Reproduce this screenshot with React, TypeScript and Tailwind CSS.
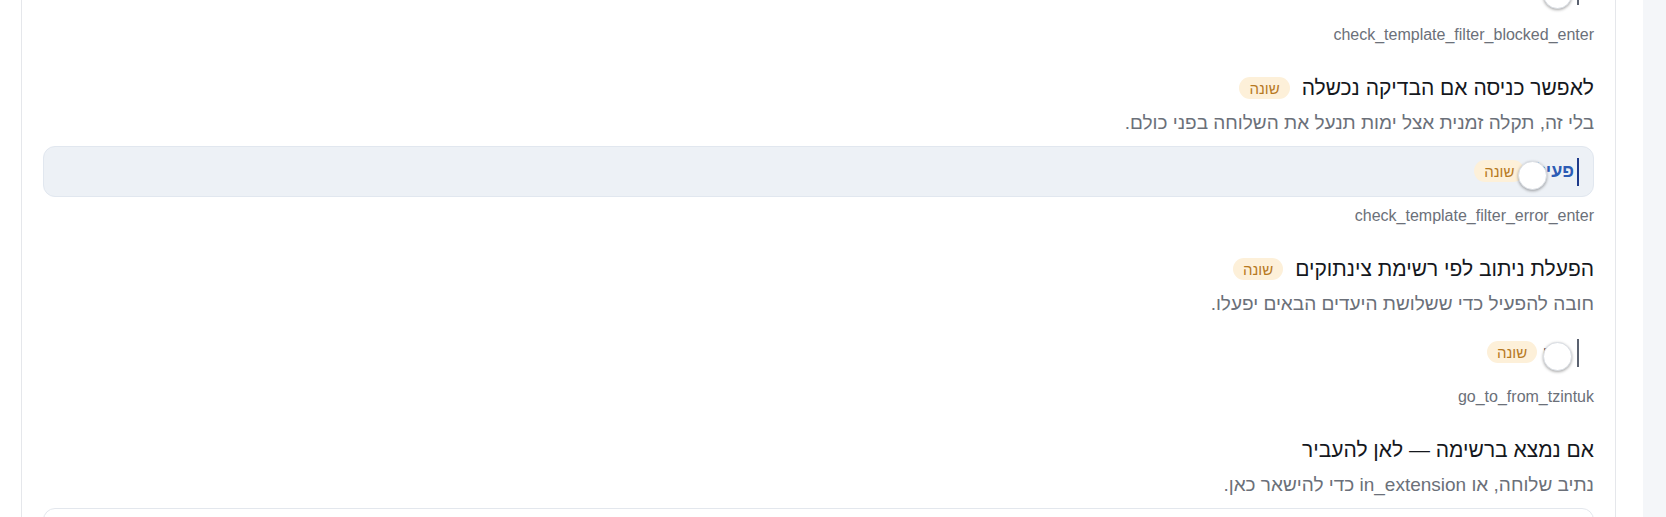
import { ReactNode } from 'react';

type ToggleState = 'on' | 'off';

interface SettingRow {
  title: string;
  changed: boolean;
  description: ReactNode;
  name: string;
  control: 'toggle' | 'input';
  state?: ToggleState;
  hovered?: boolean;
}

const rows: SettingRow[] = [
  {
    title: 'לאפשר כניסה אם הבדיקה נכשלה',
    changed: true,
    description: 'בלי זה, תקלה זמנית אצל ימות תנעל את השלוחה בפני כולם.',
    name: 'check_template_filter_error_enter',
    control: 'toggle',
    state: 'on',
    hovered: true,
  },
  {
    title: 'הפעלת ניתוב לפי רשימת צינתוקים',
    changed: true,
    description: 'חובה להפעיל כדי ששלושת היעדים הבאים יפעלו.',
    name: 'go_to_from_tzintuk',
    control: 'toggle',
    state: 'off',
  },
  {
    title: 'אם נמצא ברשימה — לאן להעביר',
    changed: false,
    description: 'נתיב שלוחה, או in_extension כדי להישאר כאן.',
    name: 'go_to_from_tzintuk_found',
    control: 'input',
  },
];

const Badge = () => (
  <span className="inline-flex h-[22px] items-center rounded-full bg-[#fdf0d9] px-[10px] text-[15px] leading-none text-[#b7791f]">
    שונה
  </span>
);

const Knob = () => (
  <span className="relative z-10 mt-[8px] block h-[29px] w-[29px] shrink-0 rounded-full border border-[#d9dde3] bg-white shadow-[0_1px_3px_rgba(0,0,0,0.35)]" />
);

const Toggle = ({ state, badge = true }: { state: ToggleState; badge?: boolean }) => {
  if (state === 'on') {
    return (
      <div className="flex items-center">
        <span className="block h-[28px] w-[2px] bg-[#1e3a8a]" />
        <span className="ms-[3px] text-[18px] font-semibold text-[#2c5cb5]">פעיל</span>
        <span className="-ms-[12px]">
          <Knob />
        </span>
        {badge && (
          <span className="-ms-[6px]">
            <Badge />
          </span>
        )}
      </div>
    );
  }
  return (
    <div className="flex items-center">
      <span className="block h-[28px] w-[2px] bg-[#5b6270]" />
      <span className="ms-[5px]">
        <Knob />
      </span>
      {badge && (
        <>
          <span className="-ms-[4px] text-[15px] text-[#4b5563]">ו</span>
          <span className="ms-[6px]">
            <Badge />
          </span>
        </>
      )}
    </div>
  );
};

const Row = ({ row }: { row: SettingRow }) => {
  const box =
    row.control === 'input'
      ? 'border border-[#e3e7ed] bg-white'
      : row.hovered
        ? 'border border-[#e1e7ef] bg-[#edf1f6]'
        : 'border border-transparent';

  return (
    <div>
      <div className="flex h-[28px] items-center gap-[12px]">
        <h3 className="text-[21px] leading-[28px] text-[#15181d]">{row.title}</h3>
        {row.changed && <Badge />}
      </div>
      <p className="mt-[8px] text-[19px] leading-[26px] text-[#6b7079]">{row.description}</p>
      <div className={`mt-[10px] flex h-[51px] items-center rounded-[12px] pr-[14px] ${box}`}>
        {row.control === 'toggle' && row.state && <Toggle state={row.state} />}
      </div>
      <div className="mt-[9px] text-[16px] leading-[20px] text-[#6b7079]">{row.name}</div>
    </div>
  );
};

// the list is scrolled: only the tail of the previous setting shows at the top
const PreviousTail = () => (
  <div>
    <div className="h-[16px] overflow-hidden">
      <div className="-mt-[35px] flex h-[51px] items-center border border-transparent pr-[14px]">
        <Toggle state="off" badge={false} />
      </div>
    </div>
    <div className="mt-[9px] text-[16px] leading-[20px] text-[#6b7079]">check_template_filter_blocked_enter</div>
  </div>
);

export default function App() {
  return (
    <div
      dir="rtl"
      className="flex h-[517px] w-full overflow-hidden bg-white font-['Liberation_Sans','DejaVu_Sans',sans-serif]"
    >
      <aside className="h-full w-[23px] shrink-0 bg-[#f4f6f9]" />
      <main className="min-w-0 flex-1 pl-[21px] pr-[27px]">
        <section className="flex flex-col gap-[29px] border-x border-[#e5e7eb] px-[21px] pb-10">
          <PreviousTail />
          {rows.map((row) => (
            <Row key={row.name} row={row} />
          ))}
        </section>
      </main>
    </div>
  );
}
